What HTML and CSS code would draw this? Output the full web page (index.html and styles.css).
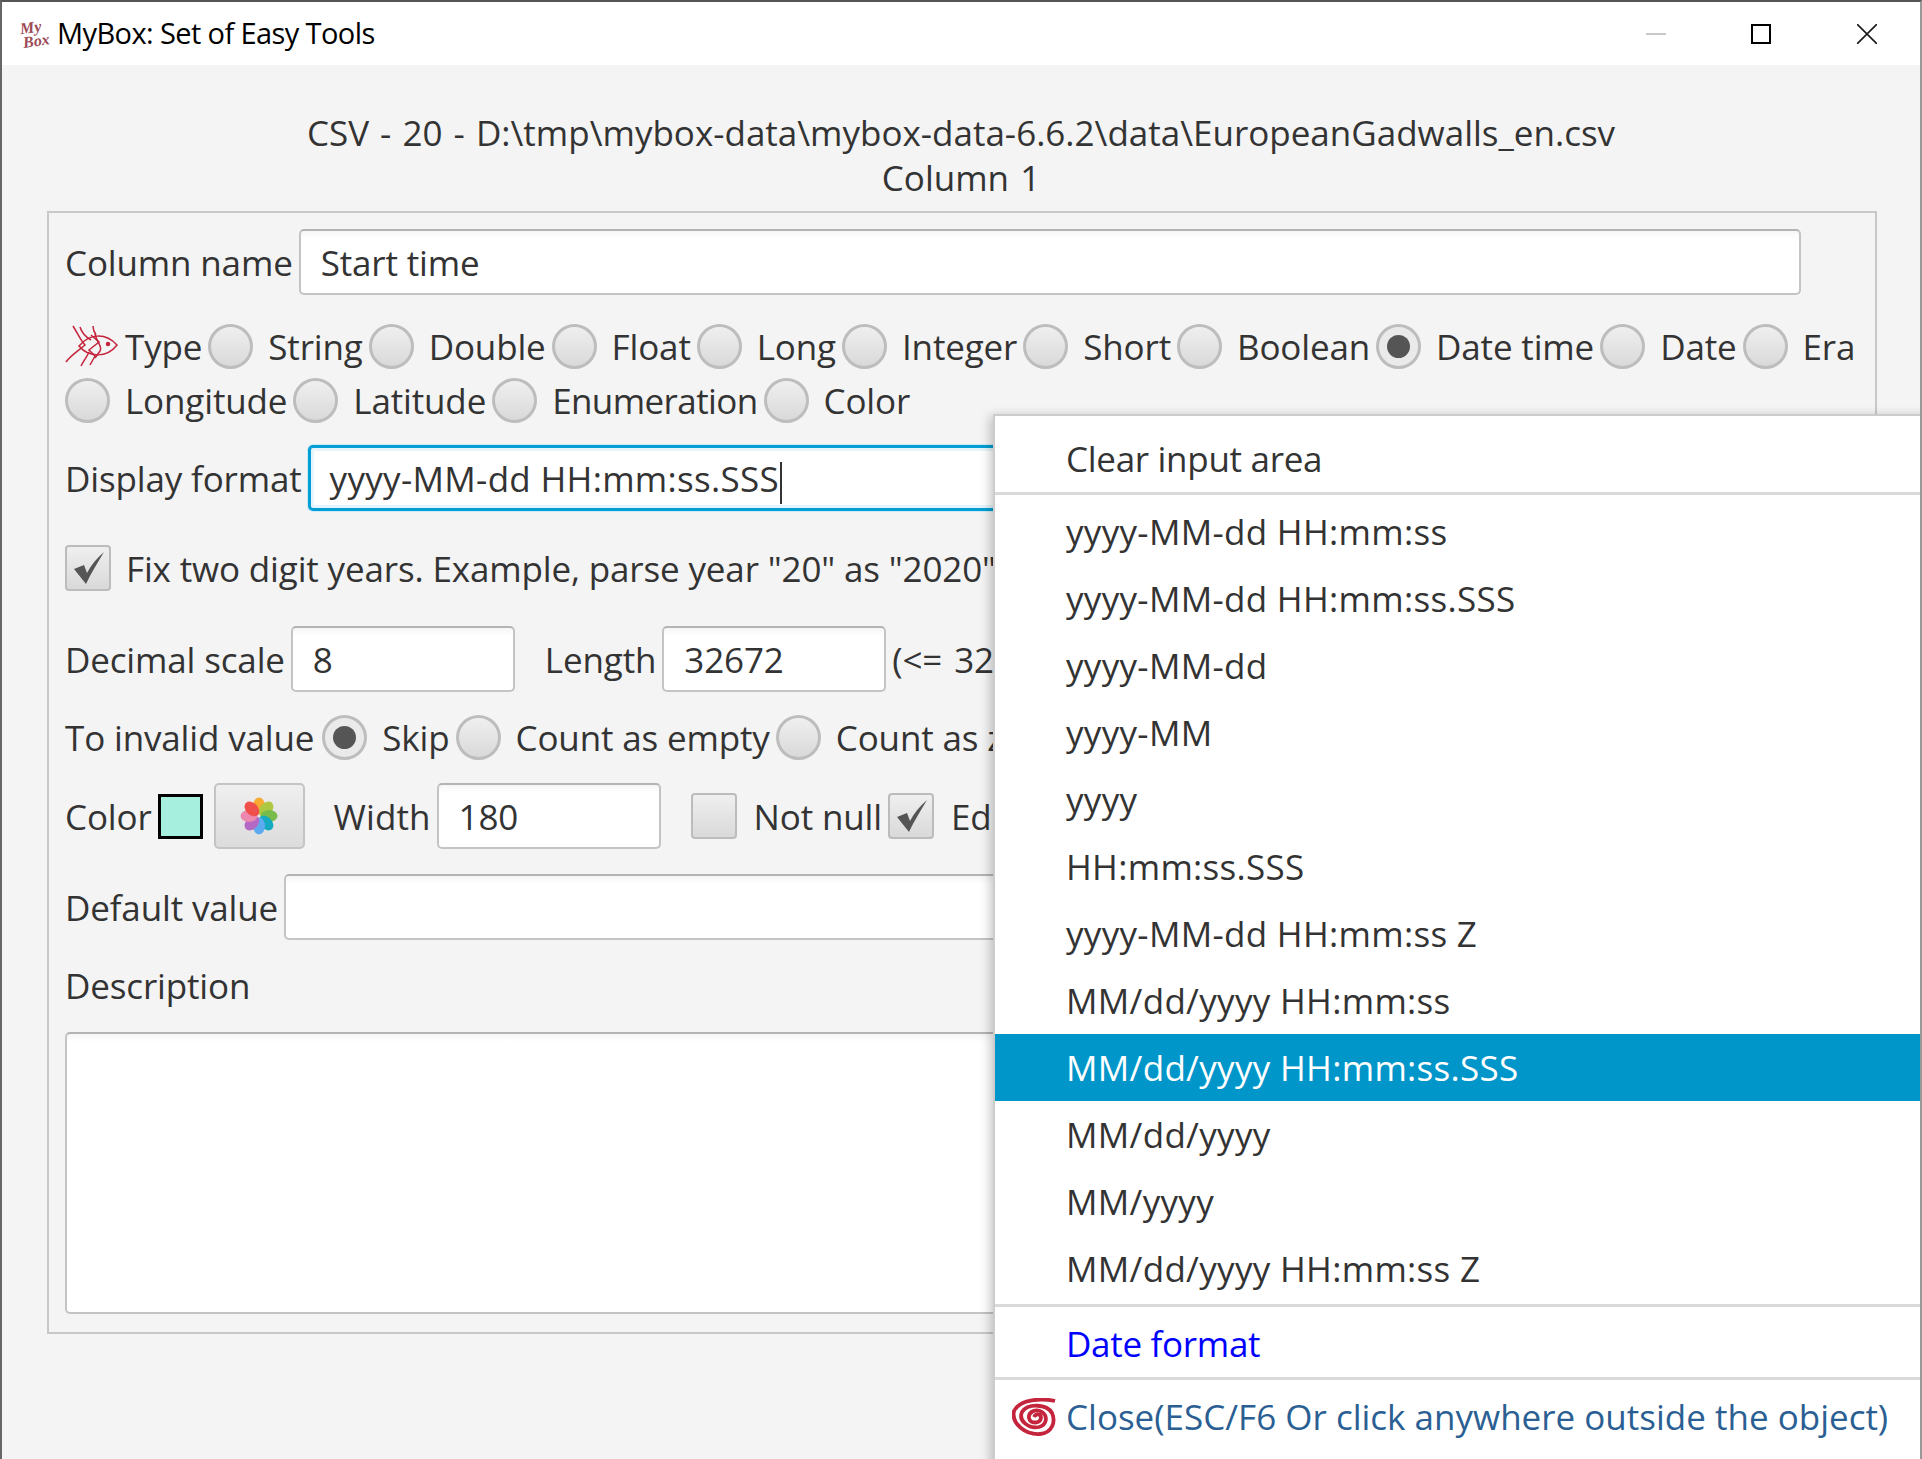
FILE: index.html
```html
<!DOCTYPE html>
<html lang="en">
<head>
    <meta charset="UTF-8">
    <title>MyBox: Set of Easy Tools</title>
    <link rel="stylesheet" href="styles.css">
</head>
<body>
    <div class="window">
        <div class="titlebar">
            <div class="logo"><span>My</span><span class="logo-box">Box</span></div>
            <div class="title">MyBox: Set of Easy Tools</div>
            <div class="win-buttons">
                <svg class="win-min" width="20" height="20" viewBox="0 0 20 20"><path d="M0 10H20" stroke="#c8c8c8" stroke-width="2"/></svg>
                <svg class="win-max" width="20" height="20" viewBox="0 0 20 20"><rect x="1" y="1" width="18" height="18" fill="none" stroke="#000" stroke-width="2"/></svg>
                <svg class="win-close" width="20" height="20" viewBox="0 0 20 20"><path d="M0 0L20 20M20 0L0 20" stroke="#1a1a1a" stroke-width="1.6"/></svg>
            </div>
        </div>

        <div class="heading">
            <div>CSV - 20 - D:\tmp\mybox-data\mybox-data-6.6.2\data\EuropeanGadwalls_en.csv</div>
            <div>Column 1</div>
        </div>

        <div class="panel">
            <div class="row row-name">
                <label>Column name</label>
                <input class="field grow" value="Start time">
            </div>

            <!-- data type -->
            <div class="row row-type">
                <svg class="fish" width="54" height="44" viewBox="0 0 54 44" fill="none" stroke="#c4243c" stroke-width="1.5">
                    <path d="M14 21C24 9 40 7 52 20C42 33 24 33 14 21Z"/>
                    <path d="M1 37C6 30 13 26 20 20C16 16 13 9 8 1"/>
                    <path d="M26 10L34 17L24 25L30 31L25 40"/>
                    <path d="M30 9C32 18 38 22 35 26L30 33"/>
                    <path d="M15 2C17 9 21 12 26 15M28 1C28 5 29 7 31 10M16 41C19 35 22 32 24 27"/>
                    <circle cx="43" cy="19" r="1.5" fill="#c4243c"/>
                </svg>
                <label>Type</label>
                <div class="radio"></div><label class="opt">String</label>
                <div class="radio"></div><label class="opt">Double</label>
                <div class="radio"></div><label class="opt">Float</label>
                <div class="radio"></div><label class="opt">Long</label>
                <div class="radio"></div><label class="opt">Integer</label>
                <div class="radio"></div><label class="opt">Short</label>
                <div class="radio"></div><label class="opt">Boolean</label>
                <div class="radio on"></div><label class="opt">Date time</label>
                <div class="radio"></div><label class="opt">Date</label>
                <div class="radio"></div><label class="opt">Era</label>
            </div>
            <div class="row row-type2">
                <div class="radio"></div><label class="opt">Longitude</label>
                <div class="radio"></div><label class="opt">Latitude</label>
                <div class="radio"></div><label class="opt enum">Enumeration</label>
                <div class="radio"></div><label class="opt">Color</label>
            </div>

            <div class="row row-format">
                <label>Display format</label>
                <div class="field focused grow">yyyy-MM-dd HH:mm:ss.SSS<span class="caret"></span></div>
            </div>

            <div class="row row-fix">
                <div class="check on">
                    <svg width="31" height="33" viewBox="0 0 31 33"><path d="M0 17L10 13L13 21C17 13 23 6 30 0C24 10 17 21 12 32Z" fill="#555"/></svg>
                </div>
                <label class="opt">Fix two digit years. Example, parse year "20" as "2020"</label>
            </div>

            <div class="row row-scale">
                <label>Decimal scale</label>
                <input class="field small" value="8">
                <label class="after-field">Length</label>
                <input class="field small" value="32672">
                <label class="limit">(&lt;= 32672)</label>
            </div>

            <div class="row row-invalid">
                <label class="invalid-label">To invalid value</label>
                <div class="radio on"></div><label class="opt">Skip</label>
                <div class="radio"></div><label class="opt">Count as empty</label>
                <div class="radio"></div><label class="opt">Count as zero</label>
            </div>

            <div class="row row-color">
                <label>Color</label>
                <div class="swatch"></div>
                <div class="pick-btn">
                    <svg width="38" height="38" viewBox="-19 -19 38 38">
                        <g opacity=".9">
                            <ellipse cx="0" cy="-10" rx="6" ry="8.5" fill="#f9a51e"/>
                            <ellipse cx="0" cy="-10" rx="6" ry="8.5" fill="#a9c52f" transform="rotate(45)"/>
                            <ellipse cx="0" cy="-10" rx="6" ry="8.5" fill="#6fb83c" transform="rotate(90)"/>
                            <ellipse cx="0" cy="-10" rx="6" ry="8.5" fill="#00a5bd" transform="rotate(135)"/>
                            <ellipse cx="0" cy="-10" rx="6" ry="8.5" fill="#4ea6f2" transform="rotate(180)"/>
                            <ellipse cx="0" cy="-10" rx="6" ry="8.5" fill="#b05cc2" transform="rotate(225)"/>
                            <ellipse cx="0" cy="-10" rx="6" ry="8.5" fill="#ee7fab" transform="rotate(270)"/>
                            <ellipse cx="0" cy="-10" rx="6" ry="8.5" fill="#f0403c" transform="rotate(315)"/>
                        </g>
                    </svg>
                </div>
                <label class="after-btn">Width</label>
                <input class="field small" value="180">
                <div class="check first-check"></div>
                <label class="opt">Not null</label>
                <div class="check on">
                    <svg width="31" height="33" viewBox="0 0 31 33"><path d="M0 17L10 13L13 21C17 13 23 6 30 0C24 10 17 21 12 32Z" fill="#555"/></svg>
                </div>
                <label class="opt">Editable</label>
            </div>

            <div class="row row-default">
                <label>Default value</label>
                <input class="field grow">
            </div>

            <div class="row row-desc"><label>Description</label></div>
            <textarea class="desc-area"></textarea>
        </div>

        <!-- popup over the form -->
        <div class="popup">
            <div class="menu-item first">Clear input area</div>
            <div class="menu-sep"></div>
            <div class="menu-list">
                <div class="menu-item">yyyy-MM-dd HH:mm:ss</div>
                <div class="menu-item">yyyy-MM-dd HH:mm:ss.SSS</div>
                <div class="menu-item">yyyy-MM-dd</div>
                <div class="menu-item">yyyy-MM</div>
                <div class="menu-item">yyyy</div>
                <div class="menu-item">HH:mm:ss.SSS</div>
                <div class="menu-item">yyyy-MM-dd HH:mm:ss Z</div>
                <div class="menu-item">MM/dd/yyyy HH:mm:ss</div>
                <div class="menu-item selected">MM/dd/yyyy HH:mm:ss.SSS</div>
                <div class="menu-item">MM/dd/yyyy</div>
                <div class="menu-item">MM/yyyy</div>
                <div class="menu-item">MM/dd/yyyy HH:mm:ss Z</div>
            </div>
            <div class="menu-sep"></div>
            <div class="menu-item link">Date format</div>
            <div class="menu-sep"></div>
            <div class="menu-item close">
                <svg class="spiral" width="44" height="38" viewBox="0 0 44 38" fill="none" stroke="#c4243c">
                    <path d="M43 3C30 0 8 1 2 13C-1 26 14 37 28 36C40 35 44 24 40 15C35 6 16 5 10 14C6 23 17 31 27 29C35 27 36 18 30 14C24 10 16 14 17 20C18 26 28 26 29 20C29 16 24 15 22 19" stroke-width="3.8"/>
                </svg>
                Close(ESC/F6 Or click anywhere outside the object)
            </div>
        </div>
    </div>
</body>
</html>
```
FILE: styles.css
```css
* {
    margin: 0;
    padding: 0;
    box-sizing: border-box;
}

html, body {
    height: 100%;
}

body {
    font-family: "Open Sans", "Noto Sans", sans-serif;
    font-size: 35px;
    letter-spacing: -0.15px;
    color: #333;
    background-color: #f4f4f4;
    overflow: hidden;
}

.window {
    position: relative;
    height: 100%;
    overflow: hidden;
    border-left: 2px solid #666;
    border-right: 2px solid #999;
    border-top: 2px solid #555;
}

/* title bar */
.titlebar {
    display: flex;
    align-items: center;
    height: 63px;
    background-color: #fff;
}

.logo {
    display: flex;
    flex-direction: column;
    width: 32px;
    margin-left: 18px;
    font-family: "Liberation Serif", serif;
    font-style: italic;
    font-weight: bold;
    font-size: 16px;
    line-height: 14px;
    letter-spacing: 0;
    color: #9c4a55;
}

.logo span {
    transform: rotate(-8deg);
}

.logo-box {
    margin-left: 3px;
}

.title {
    margin-left: 5px;
    margin-bottom: 2px;
    font-size: 29px;
    letter-spacing: -0.6px;
    color: #000;
}

.win-buttons {
    margin-left: auto;
    display: flex;
    align-items: center;
}

.win-min {
    margin-right: 85px;
}

.win-max {
    margin-right: 86px;
}

.win-close {
    margin-right: 43px;
}

.heading {
    padding-top: 45px;
    margin-bottom: 11px;
    text-align: center;
    line-height: 45px;
    letter-spacing: 0;
    word-spacing: 2px;
}

/* form */
.panel {
    margin: 0 43px 0 45px;
    height: 1123px;
    padding: 16px 74px 0 16px;
    border: 2px solid #c8c8c8;
}

.row {
    display: flex;
    align-items: center;
    white-space: nowrap;
}

.row label {
    flex: none;
    margin-right: 6px;
}

.row .opt {
    margin-left: 15px;
}

.row .enum {
    letter-spacing: -0.6px;
}

.row .invalid-label {
    margin-right: 8px;
}

.row-name { height: 66px; }
.row-type { height: 45px; margin-top: 29px; margin-right: -60px; }
.row-type2 { height: 45px; margin-top: 9px; }
.row-format { height: 66px; margin-top: 22px; }
.row-fix { height: 46px; margin-top: 34px; }
.row-scale { height: 66px; margin-top: 35px; }
.row-invalid { height: 45px; margin-top: 23px; }
.row-color { height: 66px; margin-top: 23px; }
.row-color .opt { margin-left: 17px; }
.row-default { height: 66px; margin-top: 25px; }
.row-desc { height: 44px; margin-top: 23px; }

.fish {
    flex: none;
    margin-right: 6px;
}

.field {
    display: block;
    height: 66px;
    padding: 0 20px;
    font-family: inherit;
    font-size: 35px;
    letter-spacing: -0.15px;
    line-height: 60px;
    color: #333;
    background: linear-gradient(#f6f6f6, #fff 8px);
    border: 2px solid #c4c4c4;
    border-top-color: #b4b4b4;
    border-radius: 5px;
    outline: none;
}

.grow {
    flex: 1;
    min-width: 0;
}

.small {
    flex: none;
    width: 224px;
}

.focused {
    border: 3px solid #039ed3;
    box-shadow: 0 0 0 1px #cdeaf6, inset 0 0 0 3px #e6f4fb;
    background: #fff;
    padding-left: 19px;
    line-height: 62px;
    letter-spacing: 0.3px;
}

.caret {
    display: inline-block;
    width: 2px;
    height: 42px;
    margin-left: 1px;
    vertical-align: middle;
    background-color: #333;
}

.after-field {
    margin-left: 30px;
}

.after-btn {
    margin-left: 29px;
    letter-spacing: 0.1px;
}

.row .limit {
    margin-left: 6px;
    word-spacing: 3px;
}

.radio {
    flex: none;
    position: relative;
    width: 45px;
    height: 45px;
    border: 3px solid #bdbdbd;
    border-radius: 50%;
    background: linear-gradient(#efefef, #d9d9d9);
}

.radio.on {
    background: #eaeaea;
}

.radio.on::after {
    content: "";
    position: absolute;
    top: 8px;
    left: 8px;
    width: 23px;
    height: 23px;
    border-radius: 50%;
    background-color: #555;
}

.check {
    flex: none;
    position: relative;
    width: 46px;
    height: 46px;
    border: 2px solid #bcbcbc;
    border-radius: 4px;
    background: linear-gradient(#efefef, #d9d9d9);
}

.check svg {
    position: absolute;
    left: 7px;
    top: 5px;
}

.first-check {
    margin-left: 30px;
}

.swatch {
    flex: none;
    width: 45px;
    height: 45px;
    border: 3px solid #000;
    background-color: #a6eedd;
}

.pick-btn {
    flex: none;
    display: flex;
    align-items: center;
    justify-content: center;
    width: 91px;
    height: 66px;
    margin-left: 11px;
    border: 2px solid #c4c4c4;
    border-radius: 5px;
    background: linear-gradient(#efefef, #dcdcdc);
}

.desc-area {
    display: block;
    width: 100%;
    height: 282px;
    margin-top: 25px;
    background: linear-gradient(#f6f6f6, #fff 8px);
    border: 2px solid #c4c4c4;
    border-top-color: #b4b4b4;
    border-radius: 5px;
    resize: none;
    outline: none;
}

/* popup menu */
.popup {
    position: absolute;
    top: 412px;
    left: 991px;
    width: 940px;
    height: 1060px;
    padding-top: 9px;
    background-color: #fff;
    border: 2px solid #ccc;
    box-shadow: -3px 2px 10px rgba(0, 0, 0, 0.22);
    letter-spacing: -0.3px;
}

.menu-item {
    display: flex;
    align-items: center;
    height: 67px;
    padding-left: 71px;
    white-space: nowrap;
}

.menu-list {
    padding: 3px 0 2px;
    letter-spacing: 0.3px;
}

.menu-sep {
    height: 3px;
    background-color: #dadada;
}

.selected {
    color: #fff;
    background-color: #0096c9;
}

.link {
    margin-top: 3px;
    color: #0000ff;
}

.close {
    position: relative;
    margin-top: 3px;
    letter-spacing: 0;
    color: #2b5f93;
}

.spiral {
    position: absolute;
    left: 17px;
    top: 15px;
}
```
